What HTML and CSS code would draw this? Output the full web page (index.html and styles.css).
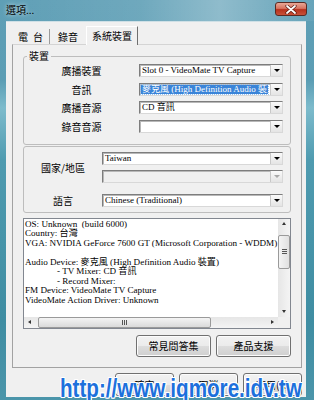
FILE: index.html
```html
<!DOCTYPE html>
<html>

<head>
    <title>選項...</title>
    <link rel="stylesheet" href="styles.css">
</head>

<body>
    <div class="window">
        <div class="titlebar">
            <span class="title">選項...</span>
            <span class="close-btn">
                <svg width="12" height="9" viewBox="0 0 12 9">
                    <path d="M2 1 L10 8 M10 1 L2 8" stroke="#5a1a10" stroke-width="3.2" stroke-linecap="round" />
                    <path d="M2 1 L10 8 M10 1 L2 8" stroke="#ffffff" stroke-width="1.8" stroke-linecap="round" />
                </svg>
            </span>
        </div>

        <div class="client">
            <div class="tabs">
                <span class="tab tab-radio">電台</span>
                <span class="tab tab-record">錄音</span>
                <span class="tab tab-system active">系統裝置</span>
            </div>

            <div class="panel">
                <!-- device group -->
                <fieldset class="group">
                    <legend>裝置</legend>
                    <div class="row">
                        <span class="label">廣播裝置</span>
                        <div class="combo"><span class="value">Slot 0 - VideoMate TV Capture</span><span class="arrow"></span></div>
                    </div>
                    <div class="row">
                        <span class="label">音訊</span>
                        <div class="combo"><span class="value selected">麥克風 (High Definition Audio 裝置)</span><span class="arrow"></span></div>
                    </div>
                    <div class="row">
                        <span class="label">廣播音源</span>
                        <div class="combo"><span class="value">CD 音訊</span><span class="arrow"></span></div>
                    </div>
                    <div class="row">
                        <span class="label">錄音音源</span>
                        <div class="combo"><span class="value"></span><span class="arrow"></span></div>
                    </div>
                </fieldset>

                <!-- region group -->
                <div class="region">
                    <div class="region-row">
                        <span class="label region-label">國家/地區</span>
                        <div class="stack">
                            <div class="combo wide"><span class="value">Taiwan</span><span class="arrow"></span></div>
                            <div class="combo wide disabled"><span class="value"></span><span class="arrow"></span></div>
                        </div>
                    </div>
                    <div class="region-row lang-row">
                        <span class="label region-label">語言</span>
                        <div class="combo wide"><span class="value">Chinese (Traditional)</span><span class="arrow"></span></div>
                    </div>
                </div>

                <!-- system info -->
                <div class="info">
                    <div class="info-text">
                        <div>OS: Unknown&nbsp; (build 6000)</div>
                        <div>Country: 台灣</div>
                        <div>VGA: NVIDIA GeForce 7600 GT (Microsoft Corporation - WDDM)</div>
                        <div>&nbsp;</div>
                        <div>Audio Device: 麥克風 (High Definition Audio 裝置)</div>
                        <div class="indent">- TV Mixer: CD 音訊</div>
                        <div class="indent">- Record Mixer:</div>
                        <div>FM Device: VideoMate TV Capture</div>
                        <div>VideoMate Action Driver: Unknown</div>
                    </div>
                    <div class="vscroll">
                        <span class="sb-arrow up"></span>
                        <span class="vthumb"><span class="grip-h"></span></span>
                        <span class="sb-fill"></span>
                        <span class="sb-arrow down"></span>
                    </div>
                    <div class="hscroll">
                        <span class="sb-arrow left"></span>
                        <span class="hthumb"><span class="grip-v"></span></span>
                        <span class="sb-fill"></span>
                        <span class="sb-arrow right"></span>
                    </div>
                    <div class="corner"></div>
                </div>

                <div class="links">
                    <button class="btn link-btn">常見問答集</button>
                    <button class="btn link-btn">產品支援</button>
                </div>
            </div>

            <div class="actions">
                <button class="btn action-btn">確定</button>
                <button class="btn action-btn">取消</button>
                <button class="btn action-btn">套用(A)</button>
            </div>
        </div>

        <div class="watermark">http://www.iqmore.idv.tw</div>
    </div>
</body>

</html>
```

FILE: styles.css
```css
body {
    margin: 0;
    font-family: "Noto Sans CJK TC", sans-serif;
    font-size: 10px;
    color: #000;
}

/* Window frame */
.window {
    width: 314px;
    height: 400px;
    position: relative;
    overflow: hidden;
    background: linear-gradient(to bottom, #5f9fb6 0%, #5b9db4 20%, #7dbbcc 27%, #4f9bb0 40%, #3f8da2 80%, #4b95aa 100%);
}

.titlebar {
    height: 21px;
    display: flex;
    justify-content: space-between;
    align-items: flex-start;
    padding: 0 7px 0 6px;
    box-sizing: border-box;
    background: linear-gradient(to right, rgba(255, 255, 255, 0) 0%, rgba(255, 255, 255, 0.1) 45%, rgba(255, 255, 255, 0.3) 70%, rgba(255, 255, 255, 0.05) 100%);
}

.title {
    font-size: 10px;
    line-height: 12px;
    margin-top: 4px;
    text-shadow: 0 0 4px rgba(255, 255, 255, 0.8);
}

.close-btn {
    width: 32px;
    height: 14px;
    margin-top: 2px;
    border: 1px solid #5b2a22;
    border-radius: 3px;
    box-sizing: border-box;
    background: linear-gradient(to bottom, #e8a795 0%, #d8735f 45%, #b8321d 55%, #c8523a 100%);
    display: flex;
    align-items: center;
    justify-content: center;
}

/* Client area */
.client {
    margin: 0 8px 0 6px;
    height: 376px;
    box-sizing: border-box;
    padding: 5px 4px 0 6px;
    background: #f0f0f0;
    border-top: 1px solid #cfe0e6;
}

.tabs {
    display: flex;
    height: 17px;
    align-items: flex-end;
}

.tab {
    height: 15px;
    line-height: 15px;
    text-align: center;
    white-space: nowrap;
    box-sizing: border-box;
    border-right: 1px solid #9a9a9a;
}

.tab-radio {
    width: 38px;
    letter-spacing: 5px;
    text-indent: 5px;
}

.tab-record {
    width: 36px;
    border-right: none;
}

.tab-system {
    width: 52px;
}

.tab.active {
    height: 19px;
    line-height: 17px;
    margin-bottom: -1px;
    background: #f0f0f0;
    border-top: 1px solid #ffffff;
    border-left: 1px solid #ffffff;
    border-right: 1px solid #6f6f6f;
    position: relative;
}

.panel {
    height: 324px;
    box-sizing: border-box;
    border: 1px solid #a2a2a2;
    border-top-color: #d4d4d4;
    padding: 0 10px;
}

/* Group boxes */
.group {
    margin: 5px 0 0 0;
    padding: 2px 0 11px 0;
    border: 1px solid #bdbdbd;
    border-radius: 3px;
    min-width: 0;
}

.group legend {
    font-size: 10px;
    line-height: 12px;
    padding: 0 2px;
    margin-left: 3px;
}

.row {
    display: flex;
    align-items: center;
    height: 13px;
    margin-bottom: 5.5px;
}

.row:last-child {
    margin-bottom: 0;
}

.label {
    width: 115px;
    text-align: center;
    line-height: 13px;
    flex-shrink: 0;
}

.region {
    margin-top: 1px;
    border: 1px solid #bdbdbd;
    border-radius: 3px;
    padding: 5px 0;
}

.region-row {
    display: flex;
    align-items: center;
}

.lang-row {
    margin-top: 11px;
}

.region-label {
    width: 78px;
}

.stack {
    display: flex;
    flex-direction: column;
    gap: 5px;
}

/* Combo boxes */
.combo {
    width: 144px;
    height: 13px;
    box-sizing: border-box;
    display: flex;
    background: #fff;
    border: 1px solid;
    border-color: #7d7d7d #d8d8d8 #d8d8d8 #7d7d7d;
    box-shadow: inset 1px 1px 0 #b8b8b8;
}

.combo.wide {
    width: 181px;
}

.combo.disabled {
    background: #f0f0f0;
}

.combo .value {
    flex: 1;
    min-width: 0;
    overflow: hidden;
    white-space: nowrap;
    font-family: "Liberation Serif", "Noto Sans CJK TC", serif;
    font-size: 9px;
    line-height: 11px;
    padding-left: 2px;
}

.combo .value.selected {
    background: #3a84d8;
    color: #fff;
    margin: 1px;
    line-height: 9px;
    outline: 1px dotted #9bc4f0;
    padding-left: 1px;
}

.combo .arrow {
    width: 11px;
    flex-shrink: 0;
    margin: 0 0 0 1px;
    background: linear-gradient(to bottom, #fafafa, #e4e4e4);
    border-left: 1px solid #c8c8c8;
    position: relative;
}

.combo .arrow:after {
    content: "";
    position: absolute;
    left: 3px;
    top: 4px;
    border-left: 3px solid transparent;
    border-right: 3px solid transparent;
    border-top: 3px solid #000;
}

.combo.disabled .arrow:after {
    border-top-color: #a8a8a8;
}

/* System info list */
.info {
    margin-top: 5px;
    height: 111px;
    box-sizing: border-box;
    border: 1px solid #828790;
    background: #fff;
    display: grid;
    grid-template-columns: 1fr 12px;
    grid-template-rows: 1fr 11px;
}

.info-text {
    overflow: hidden;
    white-space: nowrap;
    font-family: "Liberation Serif", "Noto Sans CJK TC", serif;
    font-size: 9.1px;
    line-height: 9.5px;
    padding: 1px 0 0 1px;
}

.info-text .indent {
    padding-left: 32px;
}

.vscroll {
    display: flex;
    flex-direction: column;
    background: linear-gradient(to right, #e6e6e6, #f4f4f4);
}

.hscroll {
    display: flex;
    background: linear-gradient(to bottom, #e6e6e6, #f4f4f4);
}

.corner {
    background: #f0f0f0;
}

.sb-fill {
    flex: 1;
}

.sb-arrow {
    width: 12px;
    height: 12px;
    flex-shrink: 0;
    position: relative;
}

.hscroll .sb-arrow {
    height: 11px;
}

.sb-arrow:after {
    content: "";
    position: absolute;
    border: 2px solid transparent;
}

.sb-arrow.up:after {
    left: 4px;
    top: 3px;
    border-bottom: 3px solid #333;
    border-top: none;
}

.sb-arrow.down:after {
    left: 4px;
    top: 5px;
    border-top: 3px solid #333;
    border-bottom: none;
}

.sb-arrow.left:after {
    left: 4px;
    top: 3px;
    border-right: 3px solid #333;
    border-left: none;
}

.sb-arrow.right:after {
    left: 5px;
    top: 3px;
    border-left: 3px solid #333;
    border-right: none;
}

.vthumb {
    margin-top: 4px;
    height: 34px;
    box-sizing: border-box;
    border: 1px solid #9a9a9a;
    border-radius: 2px;
    background: linear-gradient(to right, #f4f4f4, #e0e0e0);
    display: flex;
    align-items: center;
    justify-content: center;
}

.hthumb {
    margin-left: 2px;
    width: 173px;
    box-sizing: border-box;
    border: 1px solid #9a9a9a;
    border-radius: 2px;
    background: linear-gradient(to bottom, #f4f4f4, #dadada);
    display: flex;
    align-items: center;
    justify-content: center;
}

.grip-h {
    width: 5px;
    height: 5px;
    background: repeating-linear-gradient(to bottom, #555 0, #555 1px, transparent 1px, transparent 2px);
}

.grip-v {
    width: 5px;
    height: 5px;
    background: repeating-linear-gradient(to right, #555 0, #555 1px, transparent 1px, transparent 2px);
}

/* Buttons */
.btn {
    font-family: "Noto Sans CJK TC", sans-serif;
    font-size: 10px;
    line-height: 12px;
    padding: 0;
    color: #000;
    border: 1px solid #707070;
    border-radius: 3px;
    background: linear-gradient(to bottom, #f2f2f2 0%, #ebebeb 50%, #dddddd 51%, #cfcfcf 100%);
    box-shadow: inset 0 0 0 1px #fcfcfc;
}

.links {
    display: flex;
    justify-content: flex-end;
    gap: 5px;
    margin-top: 6px;
}

.link-btn {
    width: 75px;
    height: 22px;
}

.actions {
    display: flex;
    justify-content: flex-end;
    gap: 5px;
    margin-top: 5px;
}

.action-btn {
    width: 59px;
    height: 23px;
}

/* Watermark over the bottom */
.watermark {
    position: absolute;
    left: 60px;
    top: 374px;
    font-family: "Liberation Sans", sans-serif;
    font-weight: bold;
    font-size: 25px;
    line-height: 28px;
    color: #1d70dc;
    white-space: nowrap;
    transform: scaleX(0.825);
    transform-origin: left top;
    text-shadow: 1px 1px 0 #fff, -1px -1px 0 #fff, 1px -1px 0 #fff, -1px 1px 0 #fff, 0 1px 0 #fff, 0 -1px 0 #fff, 1px 0 0 #fff, -1px 0 0 #fff;
}
```
